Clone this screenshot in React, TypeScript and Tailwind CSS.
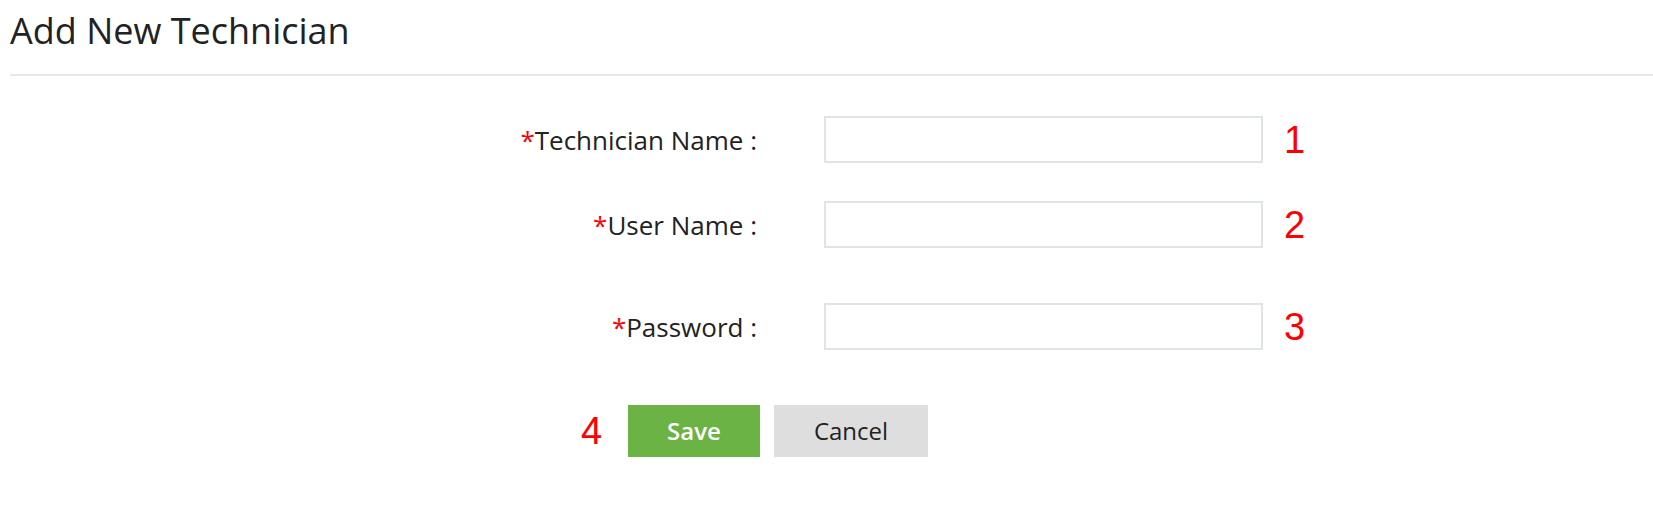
import React from 'react';

const fields = [
  { label: 'Technician Name :', num: '1', gap: 'mt-[40px]' },
  { label: 'User Name :', num: '2', gap: 'mt-[38px]' },
  { label: 'Password :', num: '3', gap: 'mt-[55px]' },
];

export default function App() {
  return (
    <div className="w-[1653px] h-[527px] bg-white font-['Open_Sans',sans-serif] text-[#222]">
      {/* Header */}
      <div className="pl-[10px]">
        <h1 className="text-[36px] leading-[36px] pt-[13px] pb-[25px] font-normal text-[#222]">Add New Technician</h1>
        <div className="h-[2px] bg-[#e8e8e8]" />
      </div>

      {/* Form rows */}
      <div className="flex flex-col">
        {fields.map((f) => (
          <div key={f.num} className={`flex items-center ${f.gap}`}>
            <label className="w-[757px] text-right text-[26px] leading-[30px] text-[#222]">
              <span className="text-[#ff0000]">*</span>
              {f.label}
            </label>
            <input
              type={f.num === '3' ? 'password' : 'text'}
              className="ml-[67px] w-[439px] h-[47px] border-2 border-[#dfe5e3] bg-white outline-none"
            />
            <span className="ml-[21px] text-[38px] leading-[38px] text-[#ff0000] font-['Liberation_Sans',sans-serif]">
              {f.num}
            </span>
          </div>
        ))}

        {/* Actions */}
        <div className="flex items-center mt-[55px] pl-[581px]">
          <span className="text-[38px] leading-[38px] text-[#ff0000] font-['Liberation_Sans',sans-serif] w-[47px]">4</span>
          <button className="w-[132px] h-[52px] bg-[#6ab344] text-white text-[24px] font-semibold">Save</button>
          <button className="ml-[14px] w-[154px] h-[52px] bg-[#dedede] text-[#222] text-[24px]">Cancel</button>
        </div>
      </div>
    </div>
  );
}
